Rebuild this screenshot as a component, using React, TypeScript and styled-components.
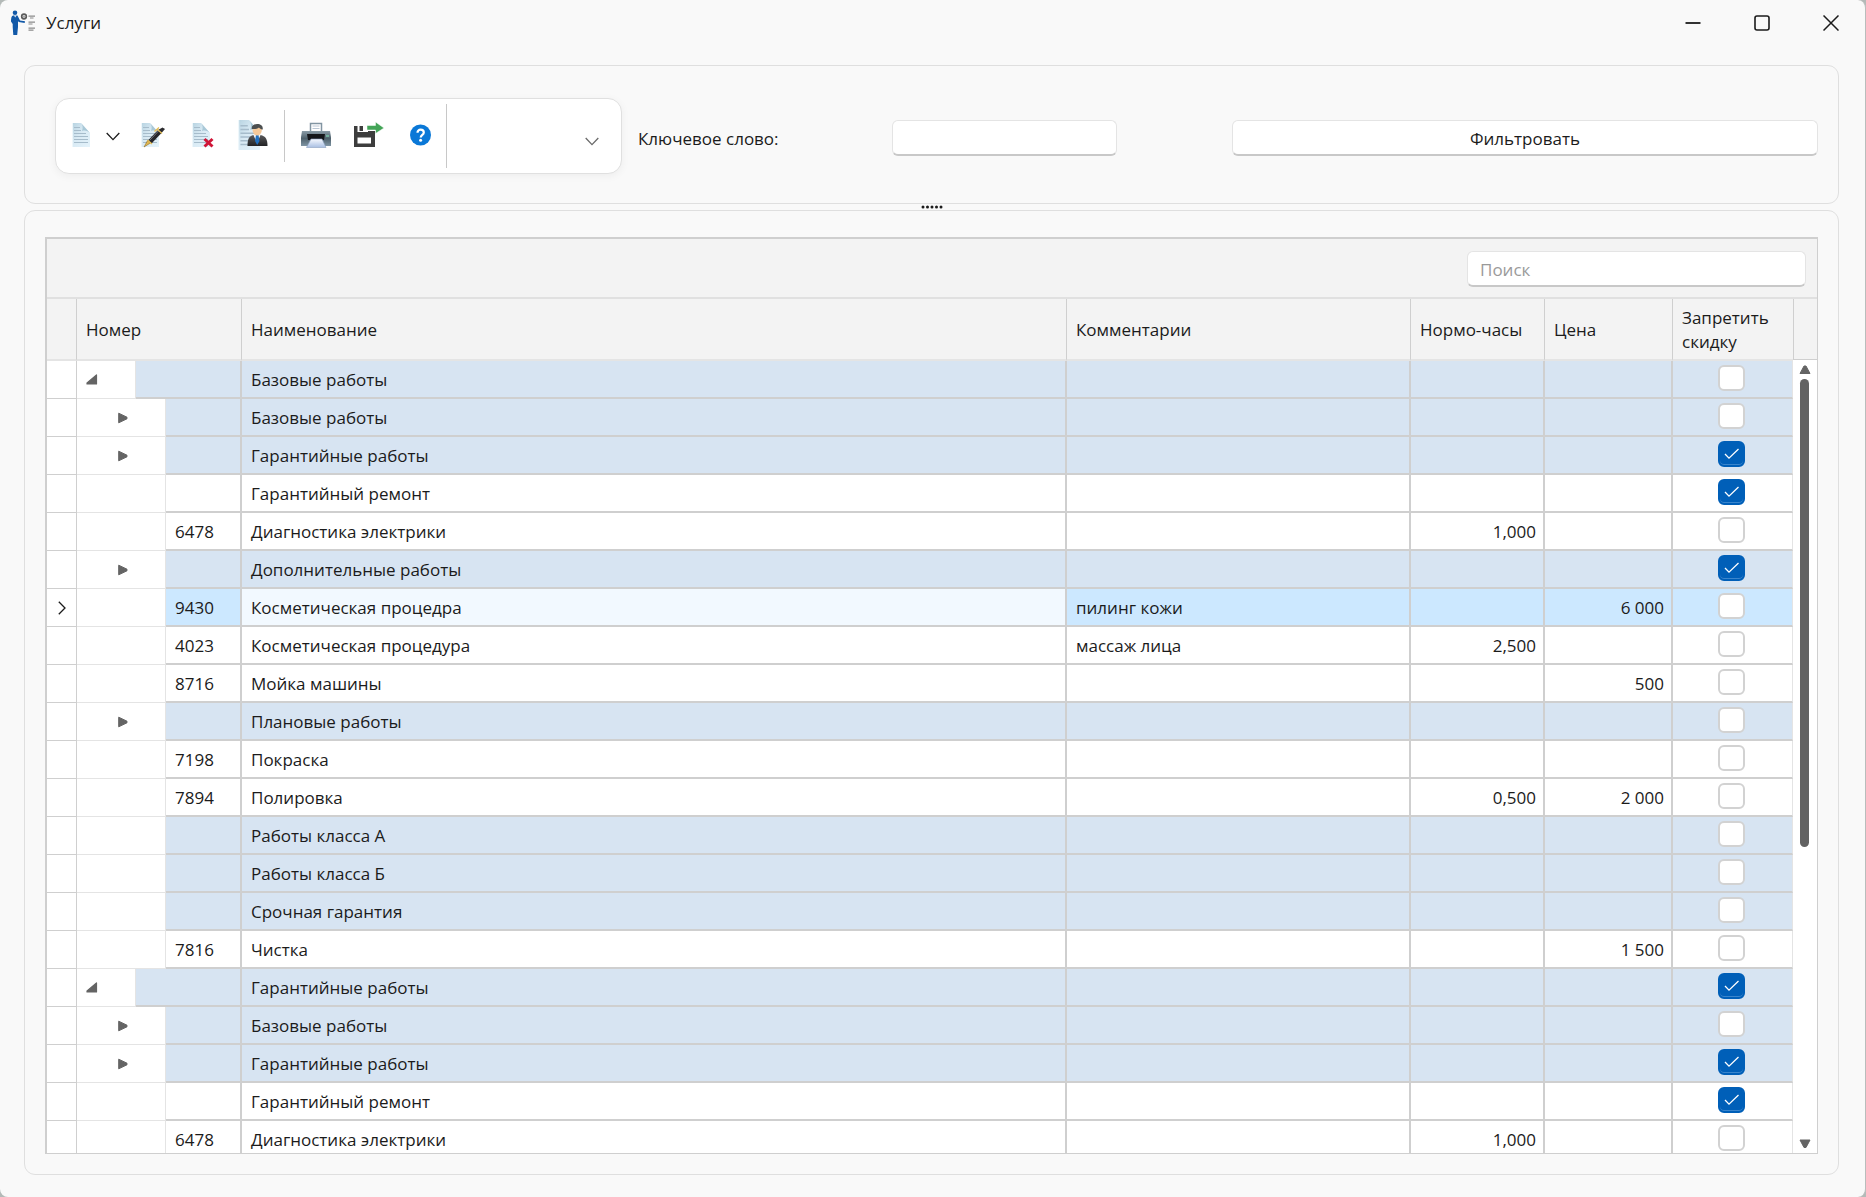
import React, { useState } from "react";
import styled, { createGlobalStyle, css } from "styled-components";

const line = "#cfcfcf";
const softLine = "#e4e4e4";
const ink = "#1b1b1b";
const glyph = "#646464";
const font = '"Open Sans", "Noto Sans", "Segoe UI", sans-serif';

const GlobalStyle = createGlobalStyle`
  *, *::before, *::after { box-sizing: border-box; }
  body { margin: 0; background: #b4bab8; }
  button, input, select { font: inherit; color: inherit; }
`;

const Window = styled.div`
  display: flex;
  flex-direction: column;
  height: 100vh;
  min-height: 480px;
  overflow: hidden;
  background: #f9f9f9;
  border-right: 1px solid #b9bdbc;
  border-radius: 8px;
  color: ${ink};
  font-family: ${font};
  font-size: 17px;
  line-height: 24px;
`;

const TitleBar = styled.header`
  display: flex;
  align-items: center;
  height: 46px;
  padding-left: 10px;
  flex: none;
`;

const Title = styled.h1`
  flex: 1;
  margin: 0 0 0 10px;
  font-size: 17px;
  font-weight: 400;
`;

const CaptionButton = styled.button`
  display: grid;
  place-items: center;
  width: 69px;
  height: 46px;
  padding: 0;
  border: 0;
  background: transparent;
`;

const Content = styled.main`
  display: flex;
  flex: 1;
  flex-direction: column;
  min-height: 0;
  padding: 19px 26px 22px 24px;
`;

const Panel = styled.section`
  border: 1px solid #dfdfdf;
  border-radius: 11px;
`;

const FilterPanel = styled(Panel)`
  display: flex;
  align-items: center;
  gap: 16px;
  padding: 32px 20px 29px 30px;
`;

const GridPanel = styled(Panel)`
  display: flex;
  flex: 1;
  min-height: 0;
  padding: 26px 20px 20px;
`;

const Splitter = styled.div`
  display: flex;
  align-items: center;
  justify-content: center;
  height: 6px;
  flex: none;
`;

const ToolBar = styled.div`
  display: flex;
  align-items: center;
  width: 567px;
  height: 76px;
  flex: none;
  padding-left: 9px;
  background: #fff;
  border: 1px solid #e0e0e0;
  border-radius: 14px;
  box-shadow: 0 2px 8px rgba(0, 0, 0, 0.05);
`;

const ToolButton = styled.button<{ $width: number }>`
  display: grid;
  place-items: center;
  width: ${(p) => p.$width}px;
  height: 48px;
  padding: 0;
  border: 0;
  background: transparent;
`;

const Divider = styled.span<{ $tall?: boolean }>`
  width: 1px;
  height: ${(p) => (p.$tall ? 64 : 52)}px;
  margin: ${(p) => (p.$tall ? "0" : "0 5px")};
  background: #c8c8c8;
`;

const ComboBox = styled.div`
  display: grid;
  flex: 1;
  align-items: center;
  padding: 0 22px 0 8px;

  select, svg { grid-area: 1 / 1; }
  svg { justify-self: end; margin-top: 10px; pointer-events: none; }
`;

const ComboSelect = styled.select`
  width: 100%;
  height: 36px;
  appearance: none;
  border: 0;
  background: transparent;
`;

const FilterForm = styled.form`
  display: flex;
  flex: 1;
  align-items: center;
  padding-top: 4px;
`;

const FilterLabel = styled.label`
  width: 254px;
  padding-top: 2px;
`;

const field = css`
  height: 36px;
  background: #fff;
  border: 1px solid #e4e4e4;
  border-bottom: 2px solid #c8c8c8;
  border-radius: 6px;
`;

const KeywordInput = styled.input`
  ${field}
  width: 225px;
  margin-right: 115px;
  padding: 2px 12px 0;
`;

const FilterButton = styled.button`
  ${field}
  flex: 1;
  padding: 2px 0 0;
`;

const Grid = styled.div`
  display: flex;
  flex: 1;
  flex-direction: column;
  min-width: 0;
  background: #fff;
  border: 1px solid ${line};
  border-width: 2px 1px 1px 2px;
`;

const SearchBand = styled.div`
  display: flex;
  justify-content: flex-end;
  height: 60px;
  flex: none;
  padding: 12px 11px 0;
  background: #f3f3f3;
  border-bottom: 2px solid #e0e0e0;
`;

const SearchInput = styled.input`
  ${field}
  width: 339px;
  padding: 2px 12px 0;
  &::placeholder { color: #9a9a9a; opacity: 1; }
`;

const GridArea = styled.div`
  display: flex;
  flex: 1;
  min-height: 0;
`;

const Viewport = styled.div`
  flex: 1;
  min-width: 0;
  overflow: hidden;
`;

const Table = styled.table`
  width: 100%;
  table-layout: fixed;
  border-collapse: separate;
  border-spacing: 0;
`;

const HeadCell = styled.th<{ $last?: boolean }>`
  height: 62px;
  padding: 2px 8px 0 9px;
  background: #f3f3f3;
  border-right: ${(p) => (p.$last ? "0" : `1px solid ${line}`)};
  border-bottom: 2px solid ${softLine};
  font-weight: 400;
  text-align: left;
`;

const Cell = styled.td<{ $bg: string; $align?: string; $last?: boolean }>`
  height: 38px;
  padding: ${(p) => (p.$last ? "0 2px 2px 0" : "2px 7px 0 9px")};
  background: ${(p) => p.$bg};
  border-right: ${(p) => (p.$last ? `1px solid ${softLine}` : `2px solid ${line}`)};
  border-bottom: 2px solid ${line};
  text-align: ${(p) => p.$align || "left"};
  white-space: nowrap;
`;

const IndicatorCell = styled.td`
  height: 38px;
  padding: 0;
  border-right: 1px solid ${line};
  border-bottom: 1px solid ${line};
  text-align: center;

  svg { display: block; margin: 0 auto; }
`;

const NumberCell = styled.td`
  padding: 0;
`;

const NumberLayout = styled.div`
  display: flex;
  height: 38px;
`;

const TreeIndent = styled.div<{ $level: number }>`
  display: flex;
  align-items: center;
  width: ${(p) => (p.$level === 0 ? 59 : 89)}px;
  padding-left: ${(p) => (p.$level === 0 ? 9 : 40)}px;
  border-right: 1px solid ${softLine};
  border-bottom: 1px solid ${softLine};
`;

const Code = styled.div<{ $bg: string }>`
  flex: 1;
  padding: 7px 0 0 9px;
  background: ${(p) => p.$bg};
  border-right: 2px solid ${line};
  border-bottom: 2px solid ${line};
`;

const Expander = styled.button`
  display: grid;
  place-items: center;
  padding: 0;
  border: 0;
  background: transparent;
`;

const CheckWrap = styled.label`
  display: grid;
  width: 27px;
  height: 26px;
  margin: 0 auto;
  place-items: center;

  input, svg { grid-area: 1 / 1; }
  svg { pointer-events: none; }
`;

const CheckInput = styled.input`
  width: 27px;
  height: 26px;
  margin: 0;
  appearance: none;
  background: #fff;
  border: 2px solid #d2d2d2;
  border-radius: 6px;

  &:checked {
    background: #005fb8;
    border-color: #005fb8;
    box-shadow: inset 0 -1px 0 #3a85cc;
  }
`;

const ScrollColumn = styled.div`
  display: flex;
  flex-direction: column;
  align-items: center;
  width: 24px;
  flex: none;
`;

const ScrollCorner = styled.div`
  width: 24px;
  height: 61px;
  flex: none;
  background: #f3f3f3;
  border-left: 1px solid ${line};
  border-bottom: 1px solid ${line};
`;

const ScrollButton = styled.button`
  display: grid;
  place-items: center;
  width: 24px;
  height: 19px;
  flex: none;
  padding: 0;
  border: 0;
  background: transparent;
`;

const ScrollTrack = styled.div`
  flex: 1;
  width: 10px;
  min-height: 0;
`;

const ScrollThumb = styled.div`
  width: 9px;
  height: 62%;
  background: #626262;
  border-radius: 5px;
`;

/* ---------- icons ---------- */

const Chevron = ({ color = "#1b1b1b" }: { color?: string }) => (
  <svg width="14" height="9" viewBox="0 0 14 9" fill="none" stroke={color} strokeWidth="1.3" aria-hidden="true">
    <path d="M.7 1 7 7.600 13.300 1" />
  </svg>
);

const Gradients = () => (
  <svg width="0" height="0" display="block" aria-hidden="true">
    <defs>
      <linearGradient id="sheet" x1="0" y1="0" x2="1" y2="1">
        <stop offset="0" stopColor="#b7d3e1" />
        <stop offset=".45" stopColor="#d9eaf4" />
        <stop offset="1" stopColor="#e4f3fb" />
      </linearGradient>
      <linearGradient id="steel" x1="0" y1="0" x2="0" y2="1">
        <stop offset="0" stopColor="#8a9ba6" />
        <stop offset=".5" stopColor="#4f616c" />
        <stop offset="1" stopColor="#7f95a4" />
      </linearGradient>
      <linearGradient id="tray" x1="0" y1="0" x2="0" y2="1">
        <stop offset="0" stopColor="#f6f9ff" />
        <stop offset="1" stopColor="#a9bfe2" />
      </linearGradient>
      <linearGradient id="suit" x1="0" y1="0" x2="0" y2="1">
        <stop offset="0" stopColor="#5a5a5c" />
        <stop offset="1" stopColor="#222224" />
      </linearGradient>
    </defs>
  </svg>
);

const Sheet = () => (
  <g>
    <path d="M0 0h9l9 10v14H0z" fill="url(#sheet)" />
    <path d="M9 0c2 2 2 5 1 8 3-1 6 0 8 2z" fill="#a9c8d7" />
    <path d="M2 4.500h6M2 7.500h7M2 10.500h12M2 13.500h14M2 16.500h14M2 19.500h14" stroke="#a6bccb" strokeWidth="1.200" />
    <path d="M.5 0v24" stroke="#eef7fb" />
  </g>
);

const SheetIcon = () => (
  <svg width="32" height="32" viewBox="0 0 32 32" aria-hidden="true">
    <g transform="translate(7 3)"><Sheet /></g>
  </svg>
);

const EditIcon = () => (
  <svg width="32" height="32" viewBox="0 0 32 32" aria-hidden="true">
    <g transform="translate(3 3)"><Sheet /></g>
    <path d="m6 27 3.500-6.500 3 2.500z" fill="#e0b650" stroke="#7b5c1c" strokeWidth=".5" />
    <path d="m10 20.500 10-10.500 3.500 3L13.500 23.500z" fill="#25252a" />
    <path d="m11.500 20.500 9-9.500" stroke="#73737b" />
    <path d="m20 10 4.500-2.500L27 9l-3.500 4z" fill="#2b2b2e" />
    <path d="m16.500 11.500 4.500-4M19.500 9.500l4.500 4M9.500 20l4.500 4" stroke="#e5be57" strokeWidth="1.300" />
  </svg>
);

const DeleteIcon = () => (
  <svg width="32" height="32" viewBox="0 0 32 32" aria-hidden="true">
    <g transform="translate(4 3)"><Sheet /></g>
    <path d="m16.500 19 8 7.500m0-7.500-8 7.500" stroke="#cf1537" strokeWidth="3" />
  </svg>
);

const PersonIcon = () => (
  <svg width="32" height="32" viewBox="0 0 32 32" aria-hidden="true">
    <g transform="scale(1.220 1.250)"><Sheet /></g>
    <path d="M9.500 26c0-7 1.500-10 6-11h7c5 1 7 4 7 11z" fill="url(#suit)" />
    <path d="m15 14 4 9 4-9z" fill="#f1f7fd" />
    <path d="M18 15h2.500l1 6-2.300 4-2.200-4z" fill="#1f6fc0" />
    <ellipse cx="19.200" cy="10" rx="4.600" ry="5.600" fill="#f5c99a" />
    <path d="M13.800 9c-.5-3 2-5 5.500-5s6 2 5.400 5.500c-1.700.3-2.700-1-3.700-2-2 1.500-5 1.700-7.200 1.500z" fill="#4c4f50" />
  </svg>
);

const PrinterIcon = () => (
  <svg width="32" height="32" viewBox="0 0 32 32" aria-hidden="true">
    <path d="M10.500 3.500h11v9h-11z" fill="#fff" stroke="#8295a2" strokeWidth="1.500" />
    <path d="M12.500 6h7M12.500 8.500h7" stroke="#bac6d4" />
    <path d="M2 11h28l1 6v9H1v-9z" fill="url(#steel)" />
    <path d="M7 14h18l-1 6H8z" fill="#15161a" />
    <path d="M11 19h11l4 8.500H6.500z" fill="url(#tray)" stroke="#8aa0c0" strokeWidth=".6" />
    <path d="M26 16h3" stroke="#7fd6b0" strokeWidth="1.200" />
  </svg>
);

const ExportIcon = () => (
  <svg width="32" height="32" viewBox="0 0 32 32" aria-hidden="true">
    <path fillRule="evenodd" d="M2 6h3.500v6H16v-1h7v16H2zM5.500 17.500v6h13.500v-6z" fill="#3d3d3d" />
    <path d="M7.500 6H11v5H7.500z" fill="#3d3d3d" />
    <path d="M15 5.500h8.500V2L32 8l-8.500 5.500V10H15z" fill="#43a457" stroke="#fff" strokeWidth=".5" />
  </svg>
);

const HelpIcon = () => (
  <svg width="32" height="32" viewBox="0 0 32 32" aria-hidden="true">
    <circle cx="16.500" cy="15" r="10.500" fill="#0a78d7" />
    <path d="M13.500 12.700c0-2 1.300-3 3.100-3s3.200 1 3.200 2.800c0 2.500-3.100 2.300-3.100 5" fill="none" stroke="#fff" strokeWidth="2.200" />
    <circle cx="16.600" cy="20.200" r="1.500" fill="#fff" />
  </svg>
);

const AppIcon = () => (
  <svg width="26" height="26" viewBox="0 0 26 26" aria-hidden="true">
    <circle cx="5" cy="2.800" r="2.300" fill="#1259a8" />
    <path d="M3 5.500h4.500l2.500 5 5 .8-.3 1.600-6-.8-.7-1V17l-.8 8H3.300L2.700 17v-3L1 11.500c0-3 .3-5.400 2-6z" fill="#1259a8" />
    <path d="m4 5.500 1.200 2 1.300-2z" fill="#e8f0fa" />
    <circle cx="14" cy="6.500" r="2.300" fill="none" stroke="#5b5b5b" strokeWidth="1.700" />
    <path d="M14 5.500v2" stroke="#5b5b5b" />
    <path d="M18.500 6.200H25M20 8h3.500M18.500 12.200H25M18.500 14h4M18.500 18.200H25M18.500 20.200h5" stroke="#8b8b8b" strokeWidth="1.200" />
  </svg>
);

const MinimizeIcon = () => (
  <svg width="16" height="16" viewBox="0 0 16 16" aria-hidden="true"><path d="M.5 8h15" stroke={ink} strokeWidth="1.800" /></svg>
);
const MaximizeIcon = () => (
  <svg width="16" height="16" viewBox="0 0 16 16" aria-hidden="true"><rect x="1" y="1" width="14" height="14" rx="2" fill="none" stroke={ink} strokeWidth="1.600" /></svg>
);
const CloseIcon = () => (
  <svg width="16" height="16" viewBox="0 0 16 16" aria-hidden="true"><path d="m.5.5 15 15m0-15-15 15" stroke={ink} strokeWidth="1.500" /></svg>
);
const OpenNode = () => (
  <svg width="12" height="12" viewBox="0 0 12 12" aria-hidden="true"><path d="M10.500 1v9H1V9z" fill={glyph} stroke={glyph} strokeWidth="1.200" strokeLinejoin="round" /></svg>
);
const ClosedNode = () => (
  <svg width="12" height="12" viewBox="0 0 12 12" aria-hidden="true"><path d="M1.700 1.200v9.600L10 6.800V5.200z" fill={glyph} stroke={glyph} strokeLinejoin="round" /></svg>
);
const RowPointer = () => (
  <svg width="8" height="14" viewBox="0 0 8 14" fill="none" aria-hidden="true"><path d="m.8.8 6.200 6.200-6.200 6.200" stroke={ink} strokeWidth="1.300" /></svg>
);
const CheckMark = () => (
  <svg width="16" height="12" viewBox="0 0 16 12" fill="none" aria-hidden="true"><path d="m1 6 4 4.200L14.500 1" stroke="#fff" strokeWidth="1.300" /></svg>
);
const ScrollArrow = ({ down }: { down?: boolean }) => (
  <svg width="12" height="10" viewBox="0 0 12 10" aria-hidden="true">
    <path d={down ? "M1 1h10L7 8.500H5z" : "M1 8.500h10L7 1H5z"} fill={glyph} stroke={glyph} strokeLinejoin="round" />
  </svg>
);
const Grip = () => (
  <svg width="22" height="4" viewBox="0 0 22 4" fill={ink} aria-hidden="true">
    {[2, 6.5, 11, 15.5, 20].map((x) => <circle key={x} cx={x} cy="2" r="1.500" />)}
  </svg>
);

/* ---------- data ---------- */

type Service = {
  name: string;
  code?: string;
  comment?: string;
  hours?: string;
  price?: string;
  banned?: boolean;
  group?: boolean;
  node?: "open" | "closed";
  level?: number;
  current?: boolean;
};

const services: Service[] = [
  { name: "Базовые работы", group: true, node: "open", level: 0 },
  { name: "Базовые работы", group: true, node: "closed" },
  { name: "Гарантийные работы", group: true, node: "closed", banned: true },
  { name: "Гарантийный ремонт", banned: true },
  { name: "Диагностика электрики", code: "6478", hours: "1,000" },
  { name: "Дополнительные работы", group: true, node: "closed", banned: true },
  { name: "Косметическая процедра", code: "9430", comment: "пилинг кожи", price: "6 000", current: true },
  { name: "Косметическая процедура", code: "4023", comment: "массаж лица", hours: "2,500" },
  { name: "Мойка машины", code: "8716", price: "500" },
  { name: "Плановые работы", group: true, node: "closed" },
  { name: "Покраска", code: "7198" },
  { name: "Полировка", code: "7894", hours: "0,500", price: "2 000" },
  { name: "Работы класса А", group: true },
  { name: "Работы класса Б", group: true },
  { name: "Срочная гарантия", group: true },
  { name: "Чистка", code: "7816", price: "1 500" },
  { name: "Гарантийные работы", group: true, node: "open", level: 0, banned: true },
  { name: "Базовые работы", group: true, node: "closed" },
  { name: "Гарантийные работы", group: true, node: "closed", banned: true },
  { name: "Гарантийный ремонт", banned: true },
  { name: "Диагностика электрики", code: "6478", hours: "1,000" },
];

const ServiceRow = ({ item }: { item: Service }) => {
  const [banned, setBanned] = useState(!!item.banned);
  const level = item.level ?? 1;
  const bg = item.current ? "#cce8ff" : item.group ? "#d7e4f2" : "#ffffff";
  return (
    <tr>
      <IndicatorCell>{item.current && <RowPointer />}</IndicatorCell>
      <NumberCell>
        <NumberLayout>
          <TreeIndent $level={level}>
            {item.node && (
              <Expander type="button" aria-label={item.node === "open" ? "Свернуть" : "Развернуть"}>
                {item.node === "open" ? <OpenNode /> : <ClosedNode />}
              </Expander>
            )}
          </TreeIndent>
          <Code $bg={bg}>{item.code}</Code>
        </NumberLayout>
      </NumberCell>
      <Cell $bg={item.current ? "#f2f9ff" : bg}>{item.name}</Cell>
      <Cell $bg={bg}>{item.comment}</Cell>
      <Cell $bg={bg} $align="right">{item.hours}</Cell>
      <Cell $bg={bg} $align="right">{item.price}</Cell>
      <Cell $bg={bg} $last>
        <CheckWrap>
          <CheckInput
            type="checkbox"
            aria-label="Запретить скидку"
            checked={banned}
            onChange={(e) => setBanned(e.target.checked)}
          />
          {banned && <CheckMark />}
        </CheckWrap>
      </Cell>
    </tr>
  );
};

export default function App() {
  return (
    <>
      <GlobalStyle />
      <Window>
        <TitleBar>
          <AppIcon />
          <Title>Услуги</Title>
          <CaptionButton type="button" aria-label="Свернуть окно"><MinimizeIcon /></CaptionButton>
          <CaptionButton type="button" aria-label="Развернуть окно"><MaximizeIcon /></CaptionButton>
          <CaptionButton type="button" aria-label="Закрыть"><CloseIcon /></CaptionButton>
        </TitleBar>
        <Content>
          <Gradients />
          <FilterPanel>
            <ToolBar role="toolbar">
              <ToolButton type="button" $width={32} aria-label="Создать"><SheetIcon /></ToolButton>
              <ToolButton type="button" $width={32} aria-label="Варианты создания"><Chevron /></ToolButton>
              <ToolButton type="button" $width={50} aria-label="Изменить"><EditIcon /></ToolButton>
              <ToolButton type="button" $width={50} aria-label="Удалить"><DeleteIcon /></ToolButton>
              <ToolButton type="button" $width={50} aria-label="Исполнитель"><PersonIcon /></ToolButton>
              <Divider />
              <ToolButton type="button" $width={52} aria-label="Печать"><PrinterIcon /></ToolButton>
              <ToolButton type="button" $width={52} aria-label="Экспорт"><ExportIcon /></ToolButton>
              <ToolButton type="button" $width={52} aria-label="Справка"><HelpIcon /></ToolButton>
              <Divider $tall />
              <ComboBox>
                <ComboSelect aria-label="Представление" defaultValue=""><option value="" /></ComboSelect>
                <Chevron color="#6a6a6a" />
              </ComboBox>
            </ToolBar>
            <FilterForm onSubmit={(e) => e.preventDefault()}>
              <FilterLabel htmlFor="keyword">Ключевое слово:</FilterLabel>
              <KeywordInput id="keyword" type="text" />
              <FilterButton type="submit">Фильтровать</FilterButton>
            </FilterForm>
          </FilterPanel>
          <Splitter role="separator"><Grip /></Splitter>
          <GridPanel>
            <Grid>
              <SearchBand>
                <SearchInput type="text" placeholder="Поиск" aria-label="Поиск" />
              </SearchBand>
              <GridArea>
                <Viewport>
                  <Table>
                    <colgroup>
                      <col width={30} />
                      <col width={165} />
                      <col />
                      <col width={344} />
                      <col width={134} />
                      <col width={128} />
                      <col width={120} />
                    </colgroup>
                    <thead>
                      <tr>
                        <HeadCell aria-label="Текущая строка" />
                        <HeadCell>Номер</HeadCell>
                        <HeadCell>Наименование</HeadCell>
                        <HeadCell>Комментарии</HeadCell>
                        <HeadCell>Нормо-часы</HeadCell>
                        <HeadCell>Цена</HeadCell>
                        <HeadCell $last>Запретить скидку</HeadCell>
                      </tr>
                    </thead>
                    <tbody>
                      {services.map((item, i) => <ServiceRow key={i} item={item} />)}
                    </tbody>
                  </Table>
                </Viewport>
                <ScrollColumn>
                  <ScrollCorner />
                  <ScrollButton type="button" aria-label="Вверх"><ScrollArrow /></ScrollButton>
                  <ScrollTrack><ScrollThumb /></ScrollTrack>
                  <ScrollButton type="button" aria-label="Вниз"><ScrollArrow down /></ScrollButton>
                </ScrollColumn>
              </GridArea>
            </Grid>
          </GridPanel>
        </Content>
      </Window>
    </>
  );
}
